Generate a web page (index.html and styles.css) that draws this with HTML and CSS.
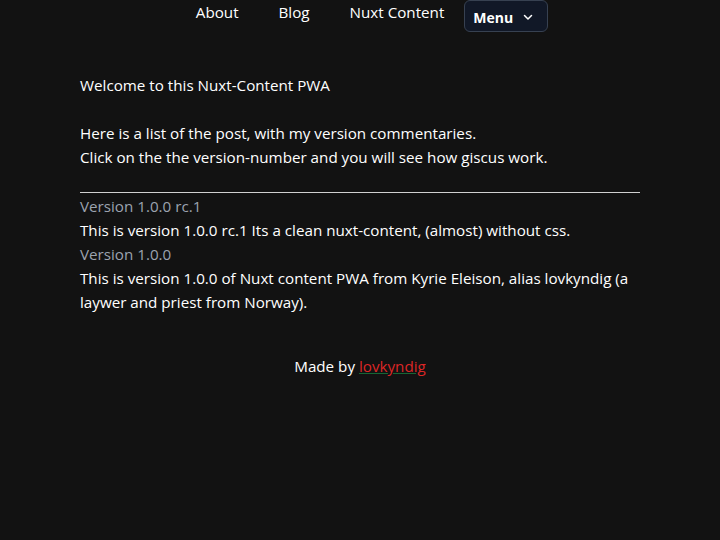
FILE: index.html
```html
<!DOCTYPE html>
<html>
<head>
<meta charset="utf-8">
<link rel="stylesheet" href="styles.css">
</head>
<body>
<header class="nav">
  <a class="nav-link" href="#">About</a>
  <a class="nav-link" href="#">Blog</a>
  <a class="nav-link" href="#">Nuxt Content</a>
  <button class="menu-btn">Menu
    <svg class="chev" width="12" height="12" viewBox="0 0 12 12"><path d="M2.5 4.5 L6 8 L9.5 4.5" fill="none" stroke="#fff" stroke-width="1.5" stroke-linecap="round" stroke-linejoin="round"/></svg>
  </button>
</header>
<main class="content">
  <p class="welcome">Welcome to this Nuxt-Content PWA</p>
  <p class="intro">Here is a list of the post, with my version commentaries.<br>Click on the the version-number and you will see how giscus work.</p>
  <hr class="rule">
  <div class="post">
    <a class="version" href="#">Version 1.0.0 rc.1</a>
    <p class="desc">This is version 1.0.0 rc.1 Its a clean nuxt-content, (almost) without css.</p>
  </div>
  <div class="post">
    <a class="version" href="#">Version 1.0.0</a>
    <p class="desc">This is version 1.0.0 of Nuxt content PWA from Kyrie Eleison, alias lovkyndig (a laywer and priest from Norway).</p>
  </div>
</main>
<footer class="footer">Made by <a class="author" href="#">lovkyndig</a></footer>
</body>
</html>
```
FILE: styles.css
```css
html, body {
  margin: 0;
  padding: 0;
  background: #121212;
  color: #ffffff;
  font-family: "Open Sans", "Noto Sans", sans-serif;
  font-size: 15.2px;
  line-height: 24px;
}
.nav {
  display: flex;
  justify-content: center;
  align-items: flex-start;
  gap: 40px;
  padding-left: 24px;
}
.nav-link {
  color: #ffffff;
  text-decoration: none;
  line-height: 25px;
}
.menu-btn {
  margin-left: -20px;
  display: flex;
  align-items: center;
  gap: 9px;
  height: 32px;
  box-sizing: border-box;
  padding: 2px 13px 0 8px;
  background: #111827;
  border: 1px solid #374151;
  border-radius: 6px;
  color: #ffffff;
  font-family: "Open Sans", "Noto Sans", sans-serif;
  font-weight: 700;
  font-size: 14px;
}
.chev { display: block; }
.content {
  width: 560px;
  margin: 0 auto;
  padding-top: 41px;
}
.welcome, .intro {
  margin: 0 0 24px 0;
}
.intro { margin-bottom: 23px; }
.rule {
  margin: 0 0 1px 0;
  border: none;
  border-top: 1px solid #d0d0d0;
  height: 0;
}
.post { display: flex; flex-direction: column; }
.version {
  color: #9ca3af;
  text-decoration: none;
}
.desc { margin: 0; }
.footer {
  text-align: center;
  margin-top: 40px;
}
.author {
  color: #dc2626;
  text-decoration: underline;
  text-decoration-color: #166534;
}
```
